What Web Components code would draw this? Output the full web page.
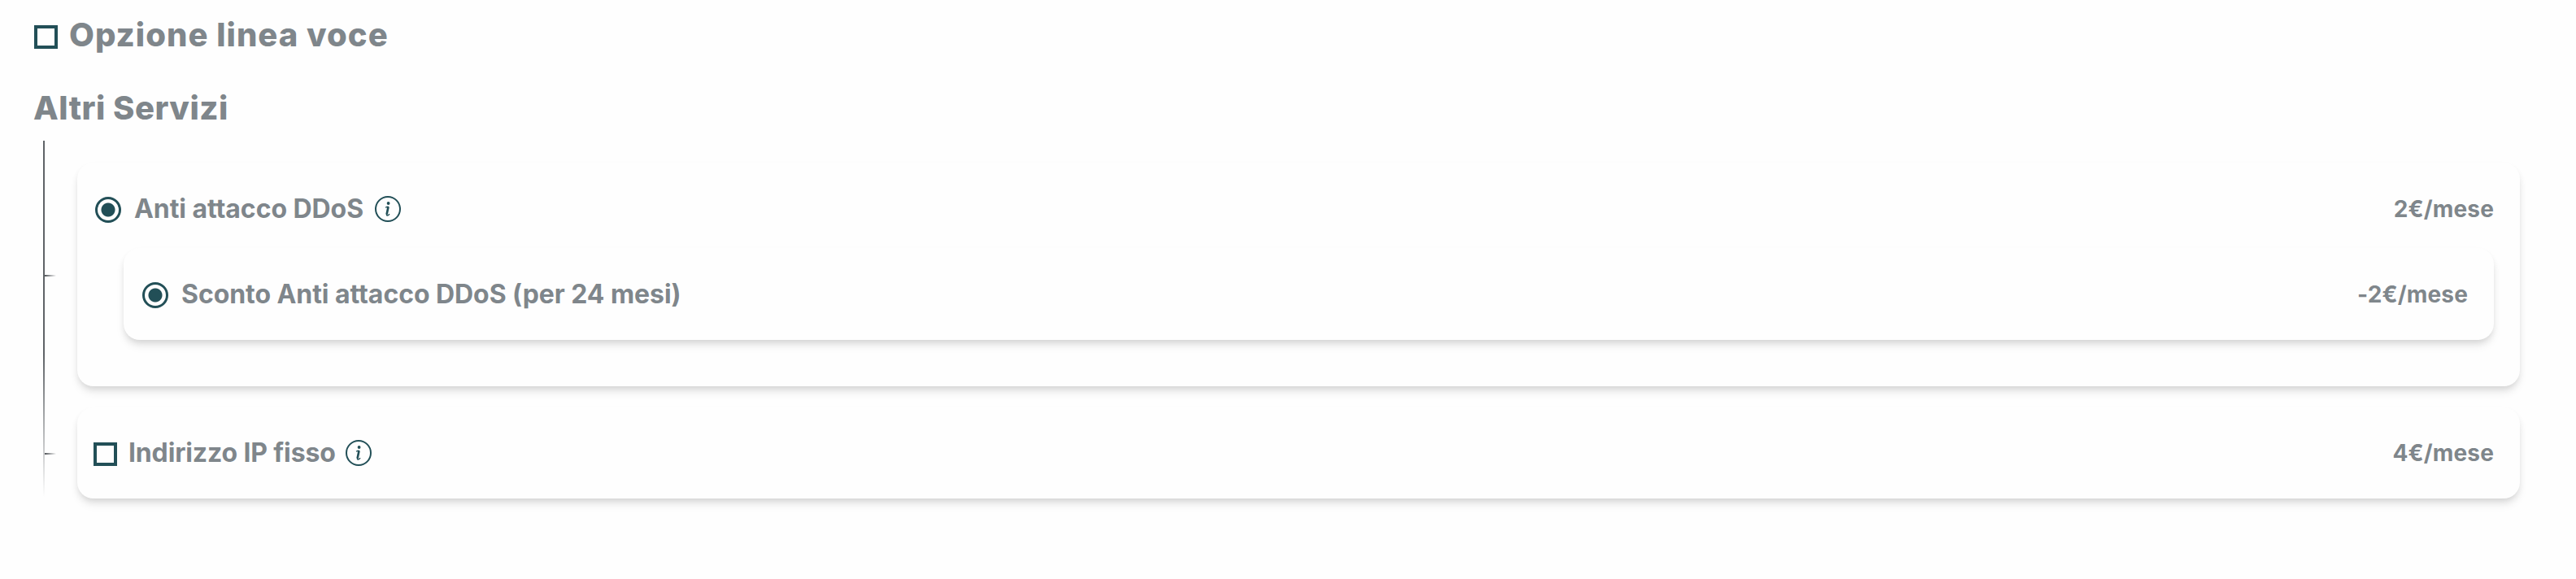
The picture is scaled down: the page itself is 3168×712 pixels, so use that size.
<!DOCTYPE html>
<html lang="it">
<head>
<meta charset="utf-8">
<title>Opzioni</title>
<style>
    body {
        margin: 0;
        background: #fefefe;
        color: #7f868b;
        font-family: Inter, "Liberation Sans", sans-serif;
    }
</style>
</head>
<body>
<service-page></service-page>
<script>
class CheckMark extends HTMLElement {
    constructor() {
        super();
        this.attachShadow({ mode: "open" });
        this.shadowRoot.innerHTML = `
            <style>
                :host {
                    display: block;
                    flex: none;
                    box-sizing: border-box;
                    width: 29px;
                    height: 29px;
                    border: 4px solid #224f57;
                }
                :host([type="radio"]) {
                    width: 32px;
                    height: 32px;
                    border: 3px solid #224f57;
                    border-radius: 50%;
                    background: radial-gradient(circle, #224f57 8px, transparent 9px);
                }
            </style>
        `;
    }
}

class InfoIcon extends HTMLElement {
    constructor() {
        super();
        this.attachShadow({ mode: "open" });
        this.shadowRoot.innerHTML = `
            <style>
                :host { display: block; flex: none; width: 32px; height: 32px; }
                svg { display: block; }
            </style>
            <svg width="32" height="32" viewBox="0 0 32 32" fill="none" stroke="#224f57">
                <circle cx="16" cy="16" r="15" stroke-width="2" />
                <circle cx="16.6" cy="9" r="1.9" fill="#224f57" stroke="none" />
                <path d="M13.1 14.2C14.2 13.4 15.6 13.2 16.7 13.2" stroke-width="1.4" />
                <path d="M16.7 13.2L14.7 21.5C14.3 23.2 14.4 24 15.3 24C16.3 24 17.2 23.1 18.1 22.2" stroke-width="1.4" />
                <path d="M16.5 13.5L14.6 22.5" stroke-width="2.6" />
            </svg>
        `;
    }
}

class ServiceRow extends HTMLElement {
    constructor() {
        super();
        this.attachShadow({ mode: "open" });
        this.shadowRoot.innerHTML = `
            <style>
                :host {
                    display: flex;
                    align-items: center;
                    height: 40px;
                    font-size: 32px;
                    line-height: 40px;
                    font-weight: 650;
                    white-space: nowrap;
                }
                info-icon { margin: -3px 0 0 14px; }
                .price { margin: -2px 0 0 auto; font-size: 28px; letter-spacing: .15px; }
                .label { margin: -2px 0 0 16px; letter-spacing: -.06px; }
                :host([type="checkbox"]) .label { margin-left: 14px; letter-spacing: -.15px; }
                :host([type="checkbox"]) info-icon { margin-left: 12px; }
            </style>
            <check-mark type="${this.getAttribute("type")}"></check-mark>
            <span class="label"><slot></slot></span>
            ${this.hasAttribute("info") ? "<info-icon></info-icon>" : ""}
            <span class="price">${this.getAttribute("price")}</span>
        `;
    }
}

class ServiceCard extends HTMLElement {
    constructor() {
        super();
        this.attachShadow({ mode: "open" });
        this.shadowRoot.innerHTML = `
            <style>
                :host {
                    display: block;
                    box-sizing: border-box;
                    border-radius: 20px;
                    background: #fefefe;
                    box-shadow: 0 8px 12px -2px rgba(0, 0, 0, .1), 0 4px 8px -2px rgba(0, 0, 0, .1);
                }
            </style>
            <slot></slot>
        `;
    }
}

class ServicePage extends HTMLElement {
    constructor() {
        super();
        this.attachShadow({ mode: "open" });
        this.shadowRoot.innerHTML = `
            <style>
                :host { display: block; padding: 19px 69px 99px 41px; }
                h2 {
                    display: flex;
                    align-items: center;
                    margin: 0;
                    height: 48px;
                    font-size: 40px;
                    line-height: 48px;
                    font-weight: 850;
                    letter-spacing: 1.02px;
                }
                h2 check-mark { margin: 5px 14px 0 1px; }
                .other { margin-top: 42px; letter-spacing: .5px; }
                .tree { display: flex; margin-top: 16px; }
                .rail {
                    flex: none;
                    width: 2px;
                    height: 438px;
                    margin-left: 12px;
                    background: linear-gradient(#5f6367 60%, rgba(95, 99, 103, 0));
                }
                .ticks { flex: none; width: 14px; padding-top: 165px; }
                .tick { height: 2px; background: linear-gradient(90deg, #4f5357, rgba(79, 83, 87, 0)); }
                .tick + .tick { margin-top: 217px; }
                .cards { flex: 1; margin: 27px 0 0 26px; }
                .main { height: 275px; padding: 38px 32px 0 22px; }
                .nested { height: 113px; margin-top: 27px; margin-left: 35px; padding: 38px 32px 0 23px; }
                .last { height: 112px; margin-top: 26px; padding: 37px 32px 0 20px; }
            </style>
            <h2><check-mark></check-mark><span>Opzione linea voce</span></h2>
            <h2 class="other"><span>Altri Servizi</span></h2>
            <div class="tree">
                <div class="rail"></div>
                <div class="ticks"><div class="tick"></div><div class="tick"></div></div>
                <div class="cards">
                    <service-card class="main">
                        <service-row type="radio" price="2€/mese" info>Anti attacco DDoS</service-row>
                        <service-card class="nested">
                            <service-row type="radio" price="-2€/mese">Sconto Anti attacco DDoS (per 24 mesi)</service-row>
                        </service-card>
                    </service-card>
                    <service-card class="last">
                        <service-row type="checkbox" price="4€/mese" info>Indirizzo IP fisso</service-row>
                    </service-card>
                </div>
            </div>
        `;
    }
}

customElements.define("check-mark", CheckMark);
customElements.define("info-icon", InfoIcon);
customElements.define("service-row", ServiceRow);
customElements.define("service-card", ServiceCard);
customElements.define("service-page", ServicePage);
</script>
</body>
</html>
